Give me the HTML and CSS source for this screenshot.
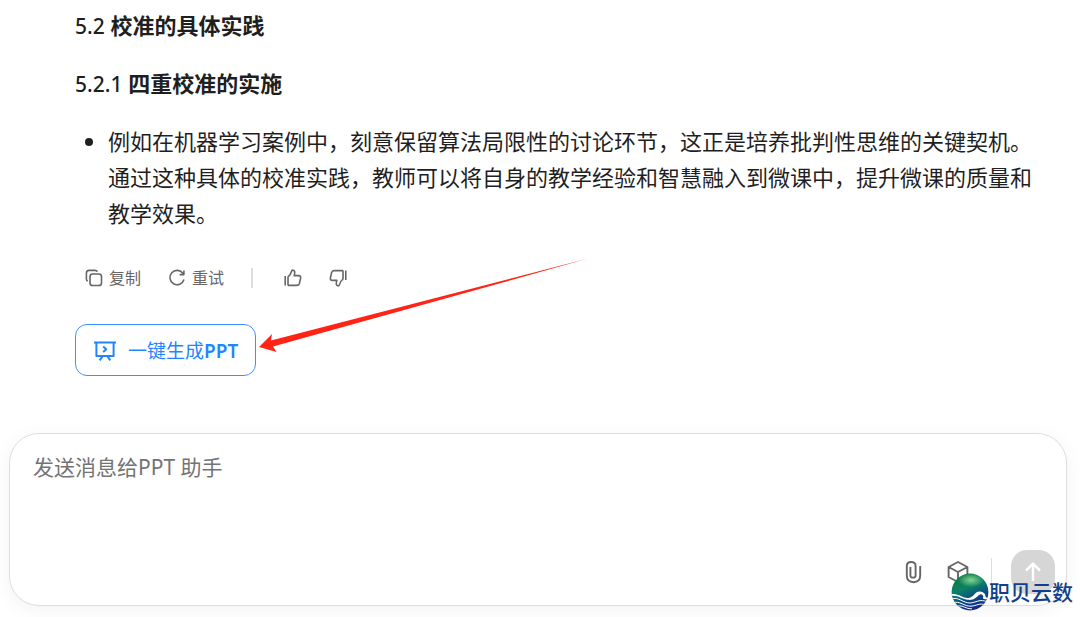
FILE: index.html
```html
<!DOCTYPE html>
<html lang="zh-CN">
<head>
<meta charset="utf-8">
<meta name="viewport" content="width=device-width, initial-scale=1">
<title>PPT 助手</title>
<link rel="stylesheet" href="styles.css">
</head>
<body>
<div class="chat">
  <div class="answer">
    <h3><span class="num">5.2</span> 校准的具体实践</h3>
    <h3><span class="num">5.2.1</span> 四重校准的实施</h3>
    <ul>
      <li>例如在机器学习案例中，刻意保留算法局限性的讨论环节，这正是培养批判性思维的关键契机。通过这种具体的校准实践，教师可以将自身的教学经验和智慧融入到微课中，提升微课的质量和教学效果。</li>
    </ul>
    <div class="actions">
      <button type="button" class="act">
        <svg width="18" height="18" viewBox="0 0 18 18"><rect x="5" y="5" width="11.5" height="11.5" rx="2.6"/><path d="M2.6 12.4Q1.4 11.6 1.4 10V4.2Q1.4 1.4 4.2 1.4H10Q11.8 1.4 12.5 2.6"/></svg>
        复制
      </button>
      <button type="button" class="act">
        <svg width="18" height="18" viewBox="0 0 18 18"><path d="M15 4.4A7.2 7.2 0 1 0 16 10.6M15.9 1.6V5.6H11.6"/></svg>
        重试
      </button>
      <span class="line"></span>
      <button type="button" class="act" aria-label="赞">
        <svg width="18" height="18" viewBox="0 0 18 18"><path d="M1.2 7V16.6M4 16.4V8Q6.8 5.6 7.4 2.6Q7.8 1 9.2 1.2Q11.2 1.6 10.6 4.6L10.2 6.6H14.6Q17 6.8 16.6 9.2L15.4 14.4Q14.8 16.4 12.8 16.4H4"/></svg>
      </button>
      <button type="button" class="act" aria-label="踩">
        <svg width="18" height="18" viewBox="0 0 18 18"><path d="M16.8 1.4V11M14 1.6V10Q11.2 12.4 10.6 15.4Q10.2 17 8.8 16.8Q6.8 16.4 7.4 13.4L7.8 11.4H3.4Q1 11.2 1.4 8.8L2.6 3.6Q3.2 1.6 5.2 1.6H14"/></svg>
      </button>
    </div>
    <div class="make">
      <button type="button" class="ppt">
        <svg width="24" height="24" viewBox="0 0 24 24"><path d="M1 3.4H23M3.4 3.4V17H20.6V3.4M10.2 7.4L13.2 10.2L10.2 13M9.6 17.4L6.6 21.4M14.4 17.4L17.4 21.4"/></svg>
        <span>一键生成<b>PPT</b></span>
      </button>
      <!-- 指向按钮的红色箭头 -->
      <svg class="arrow" width="330" height="96" viewBox="0 0 330 96"><path d="M0 89L13 76L12 82.6L329 0.6L14 88.6L17.6 94Z"/></svg>
    </div>
  </div>
  <form class="composer">
    <textarea placeholder="发送消息给PPT 助手" aria-label="发送消息"></textarea>
    <div class="tools">
      <button type="button" class="tool" aria-label="附件">
        <svg width="24" height="24" viewBox="0 0 24 24"><path d="M9.4 7V15.4Q9.4 17.6 12 17.6Q14.6 17.6 14.6 15.4V6Q14.6 2 10.2 2Q5.8 2 5.8 6V15.6Q5.8 22.2 12.5 22.2Q19.2 22.2 19.2 15.6V6"/></svg>
      </button>
      <button type="button" class="tool" aria-label="模型">
        <svg width="24" height="24" viewBox="0 0 24 24"><path d="M12 2L21.4 7V17L12 22L2.6 17V7ZM2.6 7L12 12L21.4 7M12 12V22"/></svg>
      </button>
      <span class="split"></span>
      <button type="submit" class="send" aria-label="发送" disabled>
        <svg width="24" height="24" viewBox="0 0 24 24"><path d="M12 21V4M5 10.6L12 3.6L19 10.6"/></svg>
      </button>
    </div>
    <div class="mark">
      <svg width="38" height="38" viewBox="0 0 38 38">
        <defs>
          <linearGradient id="sea" x1="0.2" y1="0" x2="0.6" y2="1">
            <stop offset="0" stop-color="#0a7a3c"/>
            <stop offset="0.4" stop-color="#0b8264"/>
            <stop offset="0.7" stop-color="#0a4c88"/>
            <stop offset="1" stop-color="#14268c"/>
          </linearGradient>
          <radialGradient id="shine">
            <stop offset="0" stop-color="#a4eaa0" stop-opacity="0.8"/>
            <stop offset="1" stop-color="#a4eaa0" stop-opacity="0"/>
          </radialGradient>
          <clipPath id="ball"><circle cx="19" cy="19" r="18.4"/></clipPath>
        </defs>
        <circle cx="19" cy="19" r="18.4" fill="url(#sea)"/>
        <ellipse cx="20" cy="7" rx="13" ry="7" fill="url(#shine)"/>
        <g clip-path="url(#ball)">
          <path fill="#fff" d="M0 21.4C7 19.6 12 26 18 25C23.4 24 23.6 18.4 29 18.6Q34 19 34.6 23.4Q35 25 37 24.6V26C32 27 31.4 25 32.4 23.4Q31 20 28 22C25 24.4 23 27.4 17 26.8C10 26 7 21.8 0 23Z"/>
          <path class="wave" d="M0 26C8 23.4 12 30.2 19 30C25 29.8 28 25.4 37 29M2 29.8C9 27.4 13 33.6 20 33.2C26 32.8 28 29.6 35 32M6 33.2C12 31.8 15 36.2 21 35.8"/>
        </g>
      </svg>
      <span>职贝云数</span>
    </div>
  </form>
</div>
</body>
</html>
```
FILE: styles.css
```css
*{
	box-sizing:border-box;
}
body{
	margin:0;
	background:#fff;
	color:#1f1f1f;
	font-family:"Noto Sans","Noto Sans CJK SC",sans-serif;
}
button{
	display:flex;
	align-items:center;
	padding:0;
	border:0;
	background:none;
	font-family:inherit;
}
svg{
	display:block;
	flex:none;
	fill:none;
	stroke:currentColor;
	stroke-linejoin:round;
}
.chat{
	padding:7px 13px 11px 9px;
}
.answer{
	padding:0 24px 0 66px;
	font-size:22px;
	line-height:36px;
}
.answer h3{
	margin:0 0 22px;
	font-size:22px;
	font-weight:700;
}
.answer .num{
	font-size:21px;
	font-weight:500;
	line-height:20px;
}
.answer ul{
	margin:0;
	padding:0 0 0 33px;
}
.actions{
	display:flex;
	align-items:center;
	height:36px;
	margin-top:29px;
	padding-left:10px;
}
.act{
	gap:6px;
	margin-right:27px;
	color:#666;
	font-size:16px;
	line-height:24px;
}
.act svg{
	stroke-width:1.6;
}
.line{
	width:2px;
	height:20px;
	margin-right:31px;
	background:#ddd;
}
.make{
	position:relative;
	margin-top:28px;
}
.ppt{
	gap:11px;
	height:52px;
	padding:1px 17px 0;
	border:1px solid #3b92fb;
	border-radius:12px;
	color:#1f86ff;
	font-size:19px;
	line-height:28px;
}
.ppt svg{
	stroke-width:2;
}
.ppt b{
	font-weight:600;
}
.arrow{
	position:absolute;
	left:184px;
	top:-66px;
	fill:#ff2416;
	stroke:none;
}
.composer{
	position:relative;
	margin-top:57px;
	padding:15px 11px 11px 23px;
	border:1px solid #dedede;
	border-radius:30px;
	background:#fff;
	box-shadow:0 4px 20px rgba(0,0,0,.05);
}
.composer textarea{
	display:block;
	width:100%;
	height:101px;
	padding:0;
	border:0;
	outline:0;
	resize:none;
	background:none;
	font-family:inherit;
	font-size:21px;
	line-height:36px;
}
.composer textarea::placeholder{
	color:#737373;
	opacity:1;
}
.tools{
	display:flex;
	align-items:center;
	justify-content:flex-end;
	height:44px;
}
.tool{
	margin-right:21px;
	color:#666;
}
.tool svg{
	stroke-width:1.9;
}
.split{
	width:1px;
	height:28px;
	margin-right:19px;
	background:#ddd;
}
.send{
	justify-content:center;
	width:44px;
	height:44px;
	border-radius:16px;
	background:#d6d6d6;
	color:#fff;
}
.send svg{
	stroke-width:2.4;
}
/* 水印 */
.mark{
	position:absolute;
	right:-7px;
	bottom:-6px;
	display:flex;
	align-items:center;
	color:#123f8c;
	font-size:21px;
	font-weight:500;
	line-height:38px;
}
.mark svg{
	stroke:none;
}
.mark .wave{
	stroke:#fff;
	stroke-width:1;
}
```
